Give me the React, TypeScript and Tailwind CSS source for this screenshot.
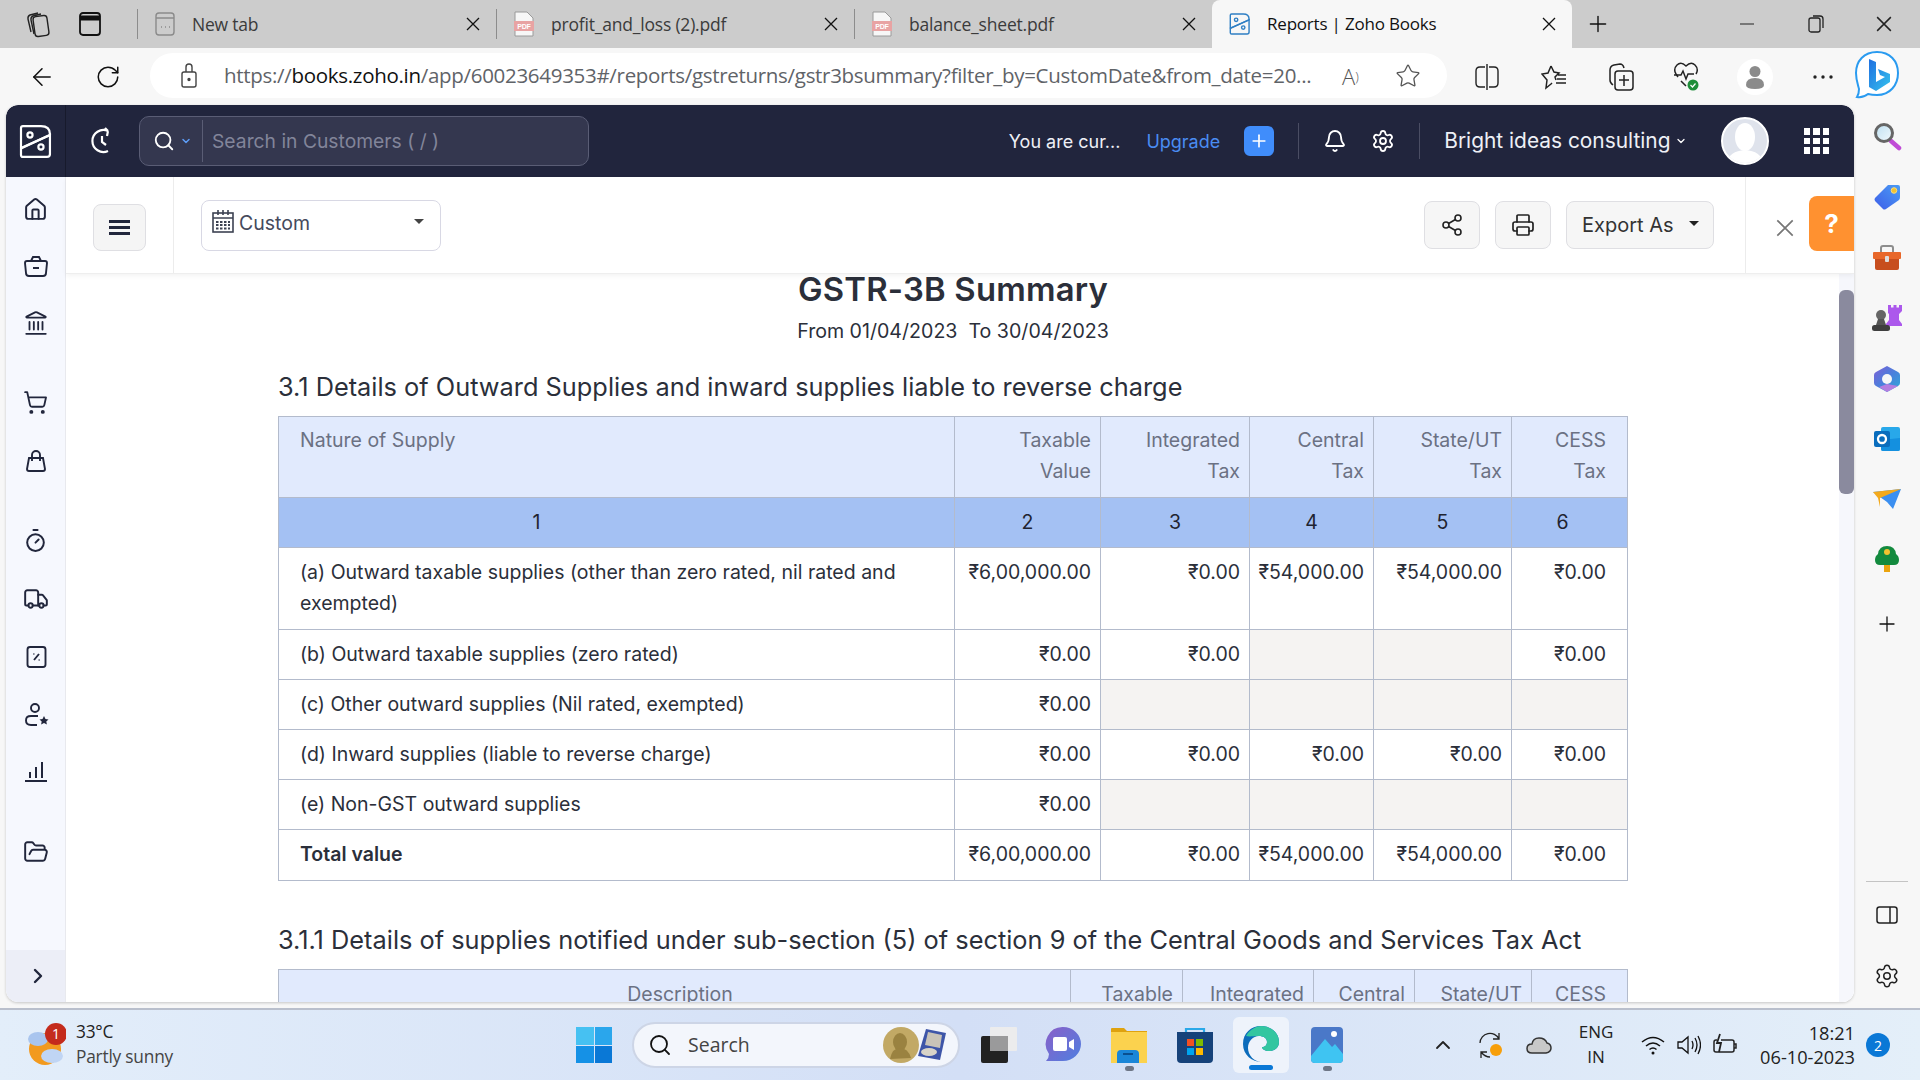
import React from 'react';
import {
  ArrowLeft, RotateCw, Star, Bell, Settings, Share2, Printer, Plus, ChevronDown, ChevronRight,
  Home, Landmark, ShoppingCart, Timer, Truck, FolderOpen, Search, ChevronUp,
} from 'lucide-react';

const CloseX = ({ size = 14, className = '' }: { size?: number; className?: string }) => (
  <svg width={size} height={size} viewBox="0 0 14 14" className={className} fill="none" stroke="currentColor" strokeWidth="1.3">
    <path d="M1 1l12 12M13 1L1 13" />
  </svg>
);

const ZohoLogo = ({ size = 36, color = '#fff' }: { size?: number; color?: string }) => (
  <svg width={size * 0.97} height={size} viewBox="0 0 34 35" fill="none" stroke={color} strokeWidth="2.2">
    <path d="M2 4q0-2 2-2h18q9 0 9 8v1L3 24q-1 .5-1-1z" />
    <path d="M2 24l29-13v19q0 3-3 3H4q-2 0-2-2z" />
    <circle cx="11" cy="11" r="2.6" />
    <circle cx="22" cy="23" r="2.6" />
  </svg>
);

const PdfIcon = () => (
  <svg width="22" height="26" viewBox="0 0 22 26">
    <path d="M2 1h12l6 6v18H2z" fill="#f7f7f7" stroke="#9a9a9a" />
    <rect x="1" y="10" width="20" height="10" fill="#e8a3a3" />
    <text x="11" y="18" textAnchor="middle" fontSize="7" fontFamily="Liberation Sans" fontWeight="700" fill="#fff">PDF</text>
  </svg>
);

const Tab = ({ title, icon, active, width }: { title: string; icon: React.ReactNode; active?: boolean; width: string }) => (
  <div className={`${width} ${active ? 'bg-[#f7f7f7] rounded-t-[8px] text-[#111] pl-[17px]' : 'pl-[16px] text-[#3b3b3b]'} h-full flex items-center`}>
    <div className="w-[22px] flex justify-center">{icon}</div>
    <span className={`ml-[16px] flex-1 whitespace-nowrap ${active ? 'text-[17px]' : 'text-[17.5px]'}`}>{title}</span>
    <CloseX size={14} className="mr-[16px] text-[#111]" />
  </div>
);

const TabBar = () => (
  <div className="h-[48px] bg-[#cccccc] flex items-end font-['Open_Sans',sans-serif] shrink-0 tracking-[-0.2px]">
    <div className="w-[137px] h-full flex items-center">
      <svg width="26" height="28" viewBox="0 0 26 28" fill="none" stroke="#222" strokeWidth="1.4" className="ml-[25px]">
        <rect x="9" y="6" width="14" height="20" rx="3" transform="rotate(-8 16 16)" />
        <path d="M6 22L3 9q-.4-3 2-4l8-2M9 24L6 10q-.4-3 2-4l8-2" />
      </svg>
      <svg width="24" height="26" viewBox="0 0 24 26" fill="none" stroke="#111" strokeWidth="1.8" className="ml-[27px]">
        <rect x="2" y="2" width="20" height="22" rx="3" />
        <path d="M2 7h20" strokeWidth="5" />
      </svg>
    </div>
    <div className="w-px h-[30px] bg-[#8c8c8c] mb-[9px]" />
    <Tab width="w-[358px]" title="New tab" icon={
      <svg width="20" height="24" viewBox="0 0 20 24" fill="none" stroke="#8a8a8a" strokeWidth="1.4">
        <rect x="1" y="1" width="18" height="22" rx="3" />
        <path d="M1 6h18M6 15h1M10 15h1M14 15h1" />
      </svg>
    } />
    <div className="w-px h-[30px] bg-[#8c8c8c] mb-[9px]" />
    <Tab width="w-[357px]" title="profit_and_loss (2).pdf" icon={<PdfIcon />} />
    <div className="w-px h-[30px] bg-[#8c8c8c] mb-[9px]" />
    <Tab width="w-[357px]" title="balance_sheet.pdf" icon={<PdfIcon />} />
    <Tab active width="w-[360px]" title="Reports | Zoho Books" icon={<ZohoLogo size={24} color="#2f7fc4" />} />
    <div className="flex-1 h-full flex items-center">
      <Plus size={26} strokeWidth={1.3} className="ml-[13px] text-[#111]" />
      <svg width="14" height="2" className="ml-[129px]"><path d="M0 1h14" stroke="#222" /></svg>
      <svg width="16" height="18" viewBox="0 0 16 18" fill="none" stroke="#222" strokeWidth="1.3" className="ml-[54px]">
        <rect x="1" y="3" width="11" height="14" rx="2" />
        <path d="M5 1h7q3 0 3 3v9" />
      </svg>
      <CloseX size={16} className="ml-[52px] text-[#222]" />
    </div>
  </div>
);

const ToolBar = () => (
  <div className="h-[57px] bg-[#f7f7f7] flex items-center font-['Open_Sans',sans-serif] shrink-0">
    <ArrowLeft size={28} strokeWidth={1.3} className="ml-[28px] text-[#111]" />
    <RotateCw size={26} strokeWidth={1.4} className="ml-[39px] text-[#111]" />
    <div className="ml-[29px] w-[1297px] h-[45px] bg-white rounded-full flex items-center mt-[-2px]">
      <svg width="20" height="26" viewBox="0 0 20 26" fill="none" stroke="#444" strokeWidth="1.4" className="ml-[29px]">
        <rect x="3" y="9" width="14" height="15" rx="2" />
        <path d="M7 9V4q0-3 3-3t3 3v5" />
        <circle cx="10" cy="16.500" r="1" fill="#444" />
      </svg>
      <span className="ml-[25px] text-[20.5px] tracking-[-0.3px] text-[#5f6368] w-[1096px] whitespace-nowrap overflow-hidden">
        https://<span className="text-[#111]">books.zoho.in</span>/app/60023649353#/reports/gstreturns/gstr3bsummary?filter_by=CustomDate&amp;from_date=20...
      </span>
      <span className="ml-[22px] text-[22px] leading-[28px] text-[#555] font-light">A<span className="text-[13px] align-top">)</span></span>
      <Star size={26} strokeWidth={1.2} className="ml-[36px] text-[#555]" />
    </div>
    <svg width="24" height="28" viewBox="0 0 24 28" fill="none" stroke="#222" strokeWidth="1.4" className="ml-[28px]">
      <path d="M10 4H5Q1 4 1 8v12q0 4 4 4h5M14 4h5q4 0 4 4v12q0 4-4 4h-5M12 1v26" />
    </svg>
    <svg width="26" height="28" viewBox="0 0 26 28" fill="none" stroke="#222" strokeWidth="1.5" className="ml-[42px]">
      <path d="M10 3l3 6 5 1-4 4 1 3M10 21l-5 4 1-8-5-6 6-1 3-7M10 21l1-1M17 12h8M16 16h9M15 20h10" />
    </svg>
    <svg width="26" height="28" viewBox="0 0 26 28" fill="none" stroke="#222" strokeWidth="1.5" className="ml-[41px]">
      <path d="M5 22Q2 20 2 17V7q0-4 4-5l6-1q3 0 4 4" />
      <rect x="7" y="8" width="18" height="19" rx="3" />
      <path d="M16 12v11M11 17h10" />
    </svg>
    <svg width="26" height="30" viewBox="0 0 26 30" fill="none" stroke="#222" strokeWidth="1.5" className="ml-[39px]">
      <path d="M13 24l-5-5M5 15L3 12Q0 7 4 3t9 1q5-5 9-1t1 9" />
      <path d="M1 13h7l2-4 3 8 2-5h6" />
      <circle cx="20" cy="23" r="5.500" fill="#1f8f3a" stroke="none" />
      <path d="M17.500 23l2 2 3-3.500" stroke="#fff" strokeWidth="1.2" />
    </svg>
    <div className="ml-[38px] w-[36px] h-[36px] rounded-full bg-white flex items-center justify-center">
      <svg width="18" height="24" viewBox="0 0 18 24" fill="#8b8b8b">
        <circle cx="9" cy="6.500" r="5.500" />
        <path d="M0 20q0-7 9-7t9 7q0 4-9 4t-9-4z" />
      </svg>
    </div>
    <svg width="20" height="4" viewBox="0 0 20 4" fill="#222" className="ml-[40px]">
      <circle cx="2" cy="2" r="1.700" />
      <circle cx="10" cy="2" r="1.700" />
      <circle cx="18" cy="2" r="1.700" />
    </svg>
    <svg width="46" height="50" viewBox="0 0 46 50" className="ml-[21px] mt-[-3px]">
      <defs>
        <linearGradient id="bing" x1="0" y1="0" x2="1" y2="1">
          <stop offset="0" stopColor="#1f6fe0" />
          <stop offset="1" stopColor="#36c3ee" />
        </linearGradient>
      </defs>
      <path d="M23 2C10 2 2 11 2 23c0 7 2 12 3 16q0 5-2 8 6 1 11-3 4 1 9 1c13 0 21-10 21-22S36 2 23 2z" fill="#fff" stroke="#2a9bf0" strokeWidth="2" />
      <path d="M15 9l7 3v20l9-5-5-2-2-6 12 5v8l-14 9-7-4z" fill="url(#bing)" />
    </svg>
  </div>
);

const AppHeader = () => (
  <div className="h-[72px] bg-[#21253d] rounded-t-[12px] flex items-center shrink-0 text-white">
    <div className="w-[60px] h-full flex items-center justify-center border-r border-[#171a2c]">
      <ZohoLogo size={35} />
    </div>
    <svg width="26" height="28" viewBox="0 0 26 28" fill="none" stroke="#fff" strokeWidth="2.2" className="ml-[23px]">
      <path d="M19 4A11 11 0 1 0 19 24M19 4l-3-3M19 4l-1 5M13 9v6l4 3" />
    </svg>
    <div className="ml-[24px] w-[450px] h-[50px] bg-[#34374f] border border-[#5a5d75] rounded-[10px] flex items-center">
      <Search size={22} strokeWidth={2} className="ml-[13px] text-white" />
      <ChevronDown size={12} strokeWidth={3} className="ml-[5px] text-[#5d9cf5]" />
      <div className="ml-[10px] w-px h-[42px] bg-[#5a5d75]" />
      <span className="ml-[9px] text-[19.3px] text-[#82859a] font-['Inter',sans-serif]">Search in Customers ( / )</span>
    </div>
    <div className="ml-auto flex items-center font-['Inter',sans-serif]">
      <span className="text-[18px] text-[#eef0f6]">You are cur...</span>
      <span className="ml-[26px] text-[18px] text-[#4a8cf2]">Upgrade</span>
      <div className="ml-[24px] w-[30px] h-[30px] bg-[#408dfb] rounded-[6px] flex items-center justify-center">
        <Plus size={20} strokeWidth={2} />
      </div>
      <div className="ml-[24px] w-px h-[36px] bg-[#4a4d63]" />
      <Bell size={24} strokeWidth={1.8} className="ml-[24px]" />
      <Settings size={24} strokeWidth={1.8} className="ml-[24px]" />
      <div className="ml-[24px] w-px h-[36px] bg-[#4a4d63]" />
      <span className="ml-[24px] text-[20.9px] text-[#eef0f6] whitespace-nowrap">Bright ideas consulting</span>
      <ChevronDown size={12} strokeWidth={2.5} className="ml-[4px]" />
      <div className="ml-[34px] w-[48px] h-[48px] rounded-full bg-[#dfe3ec] border-2 border-white flex items-end justify-center overflow-hidden">
        <svg width="36" height="42" viewBox="0 0 36 42" fill="#fff">
          <ellipse cx="18" cy="16" rx="10" ry="14" />
          <path d="M0 42q2-12 18-13 16 1 18 13z" />
        </svg>
      </div>
      <div className="ml-[35px] mr-[25px] grid grid-cols-3 gap-[3px]">
        {Array.from({ length: 9 }).map((_, i) => (
          <div key={i} className="w-[6.5px] h-[6.5px] bg-white" />
        ))}
      </div>
    </div>
  </div>
);

const Percent = () => (
  <svg width="24" height="24" viewBox="0 0 24 24" fill="none" stroke="#21263c" strokeWidth="1.9">
    <rect x="3.500" y="2" width="18" height="20" rx="2.500" />
    <path d="M15 9l-5 6M9.500 9h.8M14.700 15h.8" />
  </svg>
);

const SideNav = () => {
  const c = 'text-[#21263c]';
  return (
    <div className="w-[60px] bg-[#f6f8fe] flex flex-col items-center shrink-0 border-r border-[#e8e9ee] rounded-bl-[12px] overflow-hidden">
      <Home size={25} strokeWidth={1.9} className={`${c} mt-[20px]`} />
      <svg width="26" height="24" viewBox="0 0 26 24" fill="none" stroke="#21263c" strokeWidth="1.9" className="mt-[32px]">
        <path d="M2 9q0-2 2-2h18q2 0 2 2l-1 10q0 3-3 3H6q-3 0-3-3zM8 7l2-4h6l2 4M10 14h6" />
      </svg>
      <Landmark size={26} strokeWidth={1.7} className={`${c} mt-[32px]`} />
      <ShoppingCart size={25} strokeWidth={1.8} className={`${c} mt-[54px]`} />
      <svg width="24" height="24" viewBox="0 0 24 24" fill="none" stroke="#21263c" strokeWidth="1.9" className="mt-[34px]">
        <path d="M5 9h14l2 11q0 2-2 2H5q-2 0-2-2z" />
        <path d="M8 12V6a4 4 0 0 1 8 0v6" />
      </svg>
      <Timer size={25} strokeWidth={1.9} className={`${c} mt-[55px]`} />
      <Truck size={26} strokeWidth={1.8} className={`${c} mt-[33px]`} />
      <div className="mt-[33px]"><Percent /></div>
      <svg width="26" height="26" viewBox="0 0 26 26" fill="none" stroke="#21263c" strokeWidth="1.9" className="mt-[33px]">
        <circle cx="12" cy="6" r="4" />
        <path d="M15 14H8q-5 0-5 4.500T8 23h6" />
        <path d="M21 14l1.500 3 3 .4-2.200 2 .6 3-2.900-1.500-2.900 1.500.6-3-2.200-2 3-.4z" fill="#21263c" stroke="none" />
      </svg>
      <svg width="26" height="26" viewBox="0 0 26 26" fill="none" stroke="#21263c" strokeWidth="2" className="mt-[30px]">
        <path d="M2 23h22M7 20v-6M13 20V9M19 20V4" />
      </svg>
      <FolderOpen size={26} strokeWidth={1.8} className={`${c} mt-[55px]`} />
      <div className="mt-auto h-[52px] w-full bg-[#eceef7] flex items-center justify-center">
        <ChevronRight size={24} strokeWidth={2.4} className={`${c} ml-[4px]`} />
      </div>
    </div>
  );
};

const SubHeader = () => (
  <div className="h-[97px] flex items-stretch shrink-0 bg-white border-b border-[#eeeeee] shadow-[0_2px_5px_rgba(0,0,0,0.05)] z-10 font-['Inter',sans-serif]">
    <div className="w-[108px] border-r border-[#ececec] flex items-center">
      <div className="ml-[27px] w-[53px] h-[47px] bg-[#f5f5f5] border border-[#dfdfe3] rounded-[8px] flex flex-col items-center justify-center gap-[3px] mt-[5px]">
        <div className="w-[21px] h-[3px] bg-[#21263c]" />
        <div className="w-[21px] h-[3px] bg-[#21263c]" />
        <div className="w-[21px] h-[3px] bg-[#21263c]" />
      </div>
    </div>
    <div className="ml-[27px] mt-[23px] w-[240px] h-[51px] border border-[#d8d8e4] rounded-[8px] flex items-start pt-[8px]">
      <svg width="22" height="24" viewBox="0 0 22 24" fill="none" stroke="#3c4252" strokeWidth="1.6" className="ml-[10px]">
        <rect x="1" y="4" width="20" height="19" />
        <path d="M1 9h20M6 1v5M11 1v5M16 1v5" />
        <path d="M4 13h14M4 16h14M4 19.500h14" strokeDasharray="2.500 1.500" strokeWidth="1.800" />
      </svg>
      <span className="ml-[5px] text-[19.5px] text-[#454a5c]">Custom</span>
      <div className="ml-auto mr-[16px] mt-[10px] w-0 h-0 border-x-[5px] border-x-transparent border-t-[5px] border-t-[#444]" />
    </div>
    <div className="ml-auto flex items-center">
      <div className="w-[56px] h-[48px] bg-[#f6f6f6] border border-[#dfdfe3] rounded-[8px] flex items-center justify-center">
        <Share2 size={24} strokeWidth={1.6} className="text-[#222]" />
      </div>
      <div className="ml-[15px] w-[56px] h-[48px] bg-[#f6f6f6] border border-[#dfdfe3] rounded-[8px] flex items-center justify-center">
        <Printer size={24} strokeWidth={1.7} className="text-[#222]" />
      </div>
      <div className="ml-[15px] w-[148px] h-[48px] bg-[#f6f6f6] border border-[#dfdfe3] rounded-[8px] flex items-center">
        <span className="ml-[15px] text-[20px] text-[#333]">Export As</span>
        <div className="ml-[15px] w-0 h-0 border-x-[5px] border-x-transparent border-t-[5px] border-t-[#222] mt-[-3px]" />
      </div>
    </div>
    <div className="ml-[31px] w-[109px] border-l border-[#ececec] flex items-center">
      <CloseX size={18} className="ml-[30px] mt-[6px] text-[#777]" />
      <div className="ml-[15px] w-[45px] h-[55px] bg-[#ff9130] rounded-l-[8px] flex items-center justify-center text-white text-[26px] font-bold mb-[3px]">?</div>
    </div>
  </div>
);

type Row = { label: React.ReactNode; cells: (string | null)[] };

const mainRows: Row[] = [
  { label: '(a) Outward taxable supplies (other than zero rated, nil rated and exempted)', cells: ['₹6,00,000.00', '₹0.00', '₹54,000.00', '₹54,000.00', '₹0.00'] },
  { label: '(b) Outward taxable supplies (zero rated)', cells: ['₹0.00', '₹0.00', null, null, '₹0.00'] },
  { label: '(c) Other outward supplies (Nil rated, exempted)', cells: ['₹0.00', null, null, null, null] },
  { label: '(d) Inward supplies (liable to reverse charge)', cells: ['₹0.00', '₹0.00', '₹0.00', '₹0.00', '₹0.00'] },
  { label: '(e) Non-GST outward supplies', cells: ['₹0.00', null, null, null, null] },
  { label: <b className="font-semibold">Total value</b>, cells: ['₹6,00,000.00', '₹0.00', '₹54,000.00', '₹54,000.00', '₹0.00'] },
];

const bd = 'border border-[#b3bbcc]';
const headers = [['Taxable', 'Value'], ['Integrated', 'Tax'], ['Central', 'Tax'], ['State/UT', 'Tax'], ['CESS', 'Tax']];

const MainTable = () => (
  <table className="w-[1349px] table-fixed border-collapse text-[19.5px] leading-[31px] text-[#2b2f3a]">
    <colgroup>
      <col className="w-[676px]" />
      <col className="w-[146px]" />
      <col className="w-[149px]" />
      <col className="w-[124px]" />
      <col className="w-[138px]" />
      <col className="w-[116px]" />
    </colgroup>
    <thead>
      <tr className="h-[81px] bg-[#e1eafd] text-[#6b7183] align-top">
        <th className={`${bd} font-normal text-left pl-[21px] pt-[8px]`}>Nature of Supply</th>
        {headers.map((h, i) => (
          <th key={i} className={`${bd} font-normal text-right pt-[8px] ${i === 4 ? 'pr-[21px]' : 'pr-[9px]'}`}>
            {h[0]}<br />{h[1]}
          </th>
        ))}
      </tr>
      <tr className="h-[50px] bg-[#a4c1f3] text-[#1f2430]">
        <th className={`${bd} font-normal text-center pr-[160px] pb-[1px]`}>1</th>
        {['2', '3', '4', '5'].map(n => (
          <th key={n} className={`${bd} font-normal text-center pb-[1px]`}>{n}</th>
        ))}
        <th className={`${bd} font-normal text-center pr-[14px] pb-[1px]`}>6</th>
      </tr>
    </thead>
    <tbody>
      {mainRows.map((r, i) => (
        <tr key={i} className={i === 0 ? 'h-[82px] align-top' : i === 5 ? 'h-[51px] align-top' : 'h-[50px] align-top'}>
          <td className={`${bd} pl-[21px] pr-[40px] pt-[8.5px]`}>{r.label}</td>
          {r.cells.map((c, j) => (
            <td key={j} className={`${bd} text-right pt-[8.5px] whitespace-nowrap ${j === 4 ? 'pr-[21px]' : 'pr-[9px]'} ${c === null ? 'bg-[#f5f3f2]' : ''}`}>
              {c}
            </td>
          ))}
        </tr>
      ))}
    </tbody>
  </table>
);

const SecondTable = () => (
  <table className="mt-[13px] w-[1349px] table-fixed border-collapse text-[19.5px] leading-[32px] text-[#6b7183]">
    <colgroup>
      <col className="w-[792px]" />
      <col className="w-[112px]" />
      <col className="w-[131px]" />
      <col className="w-[101px]" />
      <col className="w-[117px]" />
      <col className="w-[96px]" />
    </colgroup>
    <thead>
      <tr className="h-[81px] bg-[#e1eafd] align-top">
        {['Description', 'Taxable', 'Integrated', 'Central', 'State/UT', 'CESS'].map((h, i) => (
          <th key={h} className={`${bd} font-normal pt-[8px] ${i === 0 ? 'text-center pl-[11px]' : i === 5 ? 'text-right pr-[21px]' : 'text-right pr-[9px]'}`}>{h}</th>
        ))}
      </tr>
    </thead>
  </table>
);

const Report = () => (
  <div className="flex-1 flex min-h-0 bg-white font-['Inter',sans-serif]">
    <div className="flex-1 overflow-hidden">
      <div className="ml-[212px] w-[1350px]">
        <h1 className="text-center text-[32.8px] leading-[30px] font-semibold text-[#2b2f3a] tracking-[0.2px] pt-0">GSTR-3B Summary</h1>
        <p className="text-center text-[19.6px] leading-[26px] text-[#2b2f3a] mt-[14px]">From 01/04/2023&nbsp; To 30/04/2023</p>
        <h2 className="text-[25.35px] leading-[32px] text-[#2b2f3a] font-normal mt-[27px] mb-[13px]">3.1 Details of Outward Supplies and inward supplies liable to reverse charge</h2>
        <MainTable />
        <h2 className="text-[25.35px] leading-[32px] text-[#2b2f3a] font-normal mt-[43px]">3.1.1 Details of supplies notified under sub-section (5) of section 9 of the Central Goods and Services Tax Act</h2>
        <SecondTable />
      </div>
    </div>
    <div className="w-[15px] bg-[#f6f7fc] shrink-0">
      <div className="mt-[16px] h-[204px] bg-[#8a8a9e] rounded-[6px]" />
    </div>
  </div>
);

const RightRail = () => (
  <div className="w-[66px] flex flex-col items-center shrink-0">
    <svg width="30" height="30" viewBox="0 0 30 30" fill="none" className="mt-[17px]">
      <defs>
        <linearGradient id="lens" x1="0" y1="0" x2="1" y2="1">
          <stop offset="0" stopColor="#bfe0f2" />
          <stop offset="1" stopColor="#f2fafd" />
        </linearGradient>
      </defs>
      <path d="M19 19l8 7" stroke="#c04bd6" strokeWidth="4.500" strokeLinecap="round" />
      <circle cx="12" cy="11" r="8.500" fill="url(#lens)" stroke="#666" strokeWidth="3" />
    </svg>
    <svg width="28" height="28" viewBox="0 0 28 28" className="mt-[31px]">
      <defs>
        <linearGradient id="tag" x1="0" y1="1" x2="1" y2="0">
          <stop offset="0" stopColor="#3f5ee8" />
          <stop offset="1" stopColor="#4a9cf5" />
        </linearGradient>
      </defs>
      <path d="M15 2h10q2 0 2 2v10q0 2-1 3L13 26q-2 1-3 0L2 18q-1-2 0-3z" fill="url(#tag)" />
      <circle cx="21" cy="7.500" r="2.800" fill="#f2c230" stroke="#f8dd7c" />
    </svg>
    <svg width="28" height="28" viewBox="0 0 28 28" className="mt-[33px]">
      <path d="M8 8V4q0-2 2-2h8q2 0 2 2v4" fill="none" stroke="#8d8d8d" strokeWidth="2" />
      <rect y="8" width="28" height="7" rx="1" fill="#e8672a" />
      <path d="M2 15h24v9q0 2-2 2H4q-2 0-2-2z" fill="#c74e1e" />
      <rect x="12" y="12" width="4" height="6" rx="1" fill="#ddd" />
    </svg>
    <svg width="30" height="28" viewBox="0 0 30 28" className="mt-[32px]">
      <path d="M16 1h3v2.500h2.500V1h3v2.500H27V1h3v6l-3 3v6l3 4v2H14v-2l3-4v-6l-1-1z" fill="#ac58ec" />
      <circle cx="9" cy="11" r="5" fill="#666" />
      <path d="M6 15h6l2 6H4z" fill="#555" />
      <rect y="21" width="18" height="6" rx="2.500" fill="#3f3f3f" />
    </svg>
    <svg width="26" height="28" viewBox="0 0 26 28" className="mt-[33px]">
      <defs>
        <linearGradient id="mso" x1="0" y1="0" x2="1" y2="1">
          <stop offset="0" stopColor="#7f5fd6" />
          <stop offset=".5" stopColor="#4a80dc" />
          <stop offset="1" stopColor="#2fa8d8" />
        </linearGradient>
      </defs>
      <path d="M13 1l11 6q2 1 2 3v8q0 2-2 3l-11 6-11-6q-2-1-2-3v-8q0-2 2-3z" fill="url(#mso)" />
      <path d="M5 22l8-3 11 2-11 6z" fill="#b57ee0" />
      <circle cx="13" cy="14" r="5" fill="#f7f7f7" />
    </svg>
    <svg width="26" height="26" viewBox="0 0 26 26" className="mt-[33px]">
      <rect x="7" y="1" width="19" height="24" rx="2" fill="#28a8ea" />
      <path d="M7 14l19-2v11q0 2-2 2H9q-2 0-2-2z" fill="#1490df" />
      <rect y="5" width="16" height="16" rx="2" fill="#0a6dbd" />
      <circle cx="8" cy="13" r="4" fill="none" stroke="#fff" strokeWidth="2.300" />
    </svg>
    <svg width="28" height="20" viewBox="0 0 28 20" className="mt-[37px]">
      <path d="M0 3l28-3-8 20-6-7z" fill="#3b8ff0" />
      <path d="M0 3l28-3L7 9 7 18 5 9z" fill="#f3a91c" />
    </svg>
    <svg width="24" height="28" viewBox="0 0 24 28" className="mt-[35px]">
      <rect x="9" y="19" width="6" height="9" fill="#eba40e" />
      <path d="M0 16q0-4 3-6 1-8 9-8t9 8q3 2 3 6 0 5-5 5H5q-5 0-5-5z" fill="#138a3e" />
      <circle cx="12" cy="8" r="3" fill="#f2c230" />
    </svg>
    <Plus size={24} strokeWidth={1.3} className="mt-[40px] text-[#111]" />
    <div className="mt-auto w-[42px] h-px bg-[#c4c4c4]" />
    <svg width="22" height="18" viewBox="0 0 22 18" fill="none" stroke="#222" strokeWidth="1.5" className="mt-[24px]">
      <rect x="1" y="1" width="20" height="16" rx="2.500" />
      <path d="M14 1v16" />
    </svg>
    <Settings size={26} strokeWidth={1.4} className="mt-[39px] mb-[19px] text-[#222]" />
  </div>
);

const Dot = () => <div className="mt-[3px] w-[9px] h-[5px] rounded-full bg-[#6e7686]" />;

const TaskIcon = ({ children, dot, ml }: { children: React.ReactNode; dot?: boolean; ml: string }) => (
  <div className={`${ml} w-[40px] flex flex-col items-center mt-[7px]`}>
    {children}
    {dot ? <Dot /> : <div className="h-[8px]" />}
  </div>
);

const TaskBar = () => (
  <div className="h-[72px] border-t-2 border-[#b9bfcc] bg-linear-to-r from-[#e3eefa] via-[#d3dff6] to-[#e4eff9] flex items-center font-['Open_Sans',sans-serif] text-[#222] shrink-0">
    <div className="ml-[28px] w-[40px] h-[48px] flex items-end">
      <svg width="38" height="46" viewBox="0 0 38 46">
        <circle cx="17" cy="26" r="16" fill="#f29a1f" />
        <ellipse cx="10" cy="16" rx="10" ry="7" fill="#a9c5ee" />
        <ellipse cx="24" cy="33" rx="11" ry="7" fill="#c0d5f4" />
        <circle cx="28" cy="11" r="11" fill="#c42b1c" />
        <text x="28" y="16" textAnchor="middle" fontSize="14" fill="#fff" fontFamily="Open Sans">1</text>
      </svg>
    </div>
    <div className="ml-[8px] w-[120px] flex flex-col text-[17.3px] leading-[25px] tracking-[-0.2px] mt-[-3px]">
      <span>33°C</span>
      <span className="text-[#444]">Partly sunny</span>
    </div>
    <div className="ml-[380px] grid grid-cols-2 gap-[1px] w-[36px] h-[36px]">
      <div className="bg-[#46c1f2]" />
      <div className="bg-[#2aa6ec]" />
      <div className="bg-[#1591e6]" />
      <div className="bg-[#0a78d6]" />
    </div>
    <div className="ml-[20px] w-[328px] h-[46px] bg-[#f3f6fc] border-2 border-[#cdd5e6] rounded-full flex items-center">
      <Search size={24} strokeWidth={1.8} className="ml-[14px] text-[#111]" />
      <span className="ml-[16px] text-[19.5px] text-[#444]">Search</span>
      <svg width="64" height="36" viewBox="0 0 64 36" className="ml-auto mr-[11px]">
        <path d="M43 2l20 4-6 27-22-4z" fill="#3d55a8" />
        <path d="M45 5l14 3-2 13-15-3z" fill="#c8c3b8" />
        <ellipse cx="46" cy="25" rx="8" ry="4" fill="#d8d4c8" />
        <circle cx="18" cy="18" r="18" fill="#c2a965" />
        <ellipse cx="17" cy="15" rx="7" ry="9" fill="#9a8240" />
        <path d="M7 32q2-11 10-11t11 10z" fill="#9a8240" />
      </svg>
    </div>
    <TaskIcon ml="ml-[19px]">
      <svg width="36" height="36" viewBox="0 0 36 36">
        <rect y="9" width="27" height="27" rx="2" fill="#222" />
        <rect x="9" y="0" width="27" height="24" rx="1" fill="#ececed" />
        <rect x="9" y="9" width="18" height="15" fill="#9a9a9b" />
      </svg>
    </TaskIcon>
    <TaskIcon ml="ml-[24px]">
      <svg width="36" height="36" viewBox="0 0 36 36">
        <defs>
          <linearGradient id="meet" x1="0" y1="0" x2="1" y2="1">
            <stop offset="0" stopColor="#8a5fc8" />
            <stop offset="1" stopColor="#4f7fe0" />
          </linearGradient>
        </defs>
        <path d="M18 0a18 17 0 0 1 0 34H1q3-3 3-7A17 17 0 0 1 18 0z" fill="url(#meet)" />
        <rect x="8" y="10" width="14" height="14" rx="2" fill="#fff" />
        <path d="M24 15l5-3v11l-5-3z" fill="#fff" />
      </svg>
    </TaskIcon>
    <TaskIcon ml="ml-[26px]" dot>
      <svg width="36" height="36" viewBox="0 0 36 36">
        <path d="M0 2q0-1 1-1h12l3 3h20v6H0z" fill="#dfa20f" />
        <rect y="5" width="36" height="31" fill="#fbd24e" />
        <path d="M6 36V27q0-4 4-4h14q4 0 4 4v9z" fill="#1a86d8" />
        <path d="M12 27h10" stroke="#0a4f8f" strokeWidth="2" />
      </svg>
    </TaskIcon>
    <TaskIcon ml="ml-[26px]">
      <svg width="36" height="36" viewBox="0 0 36 36">
        <path d="M9 8V2h18v6" fill="none" stroke="#2aa8e8" strokeWidth="2.200" />
        <path d="M0 5h36v27q0 4-4 4H4q-4 0-4-4z" fill="#16427a" />
        <rect x="10" y="12" width="7" height="7" fill="#f25022" />
        <rect x="19" y="12" width="7" height="7" fill="#7fba00" />
        <rect x="10" y="21" width="7" height="7" fill="#00a4ef" />
        <rect x="19" y="21" width="7" height="7" fill="#ffb900" />
      </svg>
    </TaskIcon>
    <div className="ml-[18px] w-[56px] h-[56px] bg-[#eef3fb] rounded-[6px] flex flex-col items-center pt-[9px]">
      <svg width="36" height="36" viewBox="0 0 36 36">
        <path d="M0 18C0 7 8 0 18 0c10 0 18 7 18 16 0 6-5 9-10 9-4 0-7-2-7-4 3 0 5-2 5-5 0-4-4-6-8-6-6 0-11 5-11 12 0 7 6 14 14 14C9 36 0 29 0 18z" fill="#0c6cbb" />
        <path d="M3 10C7 3 14 0 18 0c10 0 18 7 18 16 0 6-5 9-10 9-4 0-7-2-7-4 3 0 5-2 5-5 0-4-4-6-8-6-5 0-10 1-13 0z" fill="#33c6a0" />
      </svg>
      <div className="mt-[3px] w-[24px] h-[5px] bg-[#0a78d6] rounded-full" />
    </div>
    <TaskIcon ml="ml-[18px]" dot>
      <svg width="32" height="36" viewBox="0 0 32 36">
        <rect width="32" height="36" rx="4" fill="#4a78c8" />
        <path d="M0 29l14-17 7 8 3-3 8 10v5q0 4-4 4H4q-4 0-4-4z" fill="#3fc4f2" />
        <circle cx="23" cy="7" r="3" fill="#fff" />
      </svg>
    </TaskIcon>
    <ChevronUp size={24} strokeWidth={1.8} className="ml-[84px] text-[#222]" />
    <svg width="26" height="30" viewBox="0 0 26 30" fill="none" stroke="#222" strokeWidth="1.300" className="ml-[23px]">
      <path d="M2 13A10 10 0 0 1 21 9M21 3v6h-6M3 28v-6h6M3 22q4 5 9 5" />
      <circle cx="18" cy="20" r="6" fill="#f79f0b" stroke="none" />
    </svg>
    <svg width="26" height="18" viewBox="0 0 26 18" className="ml-[22px]">
      <path d="M6 17q-5 0-5-4.500T6 8q1-6 7-6t8 5q4 1 4 5t-5 5z" fill="#c8c8c8" stroke="#333" strokeWidth="1.500" />
    </svg>
    <div className="ml-[24px] w-[40px] flex flex-col items-center text-[17px] leading-[25px] mt-[-2px]">
      <span>ENG</span>
      <span>IN</span>
    </div>
    <svg width="24" height="20" viewBox="0 0 24 20" fill="none" stroke="#111" strokeWidth="1.500" className="ml-[25px]">
      <path d="M1 7q11-9 22 0M5 11q7-6 14 0M8.500 14.500q3.500-3 7 0" />
      <circle cx="12" cy="18" r="1.500" fill="#111" stroke="none" />
    </svg>
    <svg width="24" height="22" viewBox="0 0 24 22" fill="none" stroke="#111" strokeWidth="1.300" className="ml-[12px]">
      <path d="M1 8v6h4l6 5V3L5 8zM15 7q2 4 0 8M18 4q4 7 0 14M21 2q5 9 0 18" />
    </svg>
    <svg width="24" height="24" viewBox="0 0 24 24" fill="none" stroke="#222" strokeWidth="1.500" className="ml-[12px]">
      <path d="M8 7h11q2 0 2 2v8q0 2-2 2H3q-2 0-2-2V9q0-2 2-2h1M21 11h2v4h-2" />
      <path d="M7 1L4 10h4l-2 9" strokeWidth="1.800" />
    </svg>
    <div className="ml-auto flex flex-col items-end text-[18.2px] leading-[24px] mt-[-1px]">
      <span>18:21</span>
      <span>06-10-2023</span>
    </div>
    <div className="ml-[11px] mr-[30px] w-[24px] h-[24px] rounded-full bg-[#0a78d6] text-white text-[14px] flex items-center justify-center">2</div>
  </div>
);

export default function App() {
  return (
    <div className="w-[1920px] h-[1080px] overflow-hidden flex flex-col bg-[#f7f7f7]">
      <TabBar />
      <ToolBar />
      <div className="flex-1 flex min-h-0">
        <div className="ml-[6px] w-[1848px] mb-[6px] flex flex-col rounded-[12px] overflow-hidden shadow-[0_1px_3px_rgba(0,0,0,0.2)]">
          <AppHeader />
          <div className="flex-1 flex min-h-0">
            <SideNav />
            <div className="flex-1 flex flex-col min-w-0 bg-white">
              <SubHeader />
              <Report />
            </div>
          </div>
        </div>
        <RightRail />
      </div>
      <TaskBar />
    </div>
  );
}
